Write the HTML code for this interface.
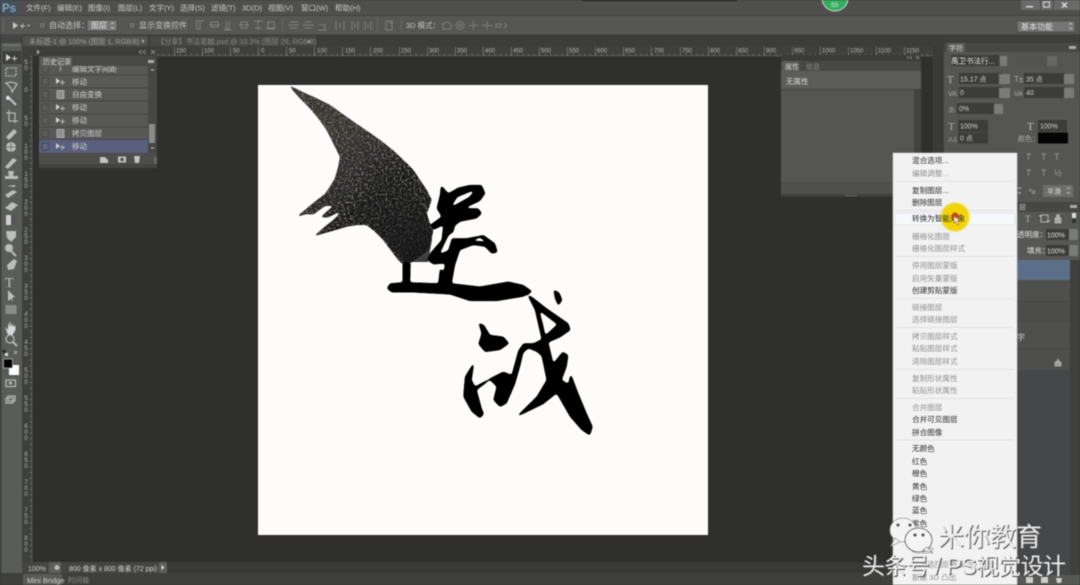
<!DOCTYPE html>
<html lang="zh"><head><meta charset="utf-8"><title>Photoshop</title>
<style>
html,body{margin:0;padding:0;width:1080px;height:585px;overflow:hidden;background:#2f302e}
svg{display:block;filter:blur(.5px)}
text{font-family:"Liberation Sans","Noto Sans CJK SC",sans-serif}
.m{font-size:7.5px;fill:#c9c9c9}
.o{font-size:8px;fill:#c4c4c4}
.r{font-size:6px;fill:#b5b5b5}
.v{font-size:6px;fill:#b5b5b5}
.h{font-size:7.5px;fill:#cfcfcf}
.p{font-size:7px;fill:#d0d0d0}
.d{font-size:7.6px;fill:#2c2c2c}
.g{font-size:7.6px;fill:#8f8f8f}
.i{fill:none;stroke:#b4b6b1;stroke-width:1.3}
.j{fill:#bcbeb9}
</style></head><body>
<svg width="1080" height="585" viewBox="0 0 1080 585" xmlns="http://www.w3.org/2000/svg">
<defs>
<pattern id="tx" x="0" y="46" width="5.62" height="10" patternUnits="userSpaceOnUse"><rect x="0" y="7.5" width=".6" height="2.5" fill="#7e7e7e"/></pattern>
<pattern id="ty" x="22" y="0" width="10" height="5.62" patternUnits="userSpaceOnUse"><rect x="7.5" y="0" width="2.5" height=".6" fill="#7e7e7e"/></pattern>
<linearGradient id="wg" gradientUnits="userSpaceOnUse" x1="290" y1="85" x2="440" y2="265"><stop offset="0" stop-color="#35342f"/><stop offset=".5" stop-color="#2a2927"/><stop offset="1" stop-color="#141414"/></linearGradient>
<filter id="goo" filterUnits="userSpaceOnUse" x="258" y="85" width="450" height="450"><feGaussianBlur stdDeviation="1.2"/><feColorMatrix type="matrix" values="1 0 0 0 0 0 1 0 0 0 0 0 1 0 0 0 0 0 10 -4"/></filter>
<filter id="ink" filterUnits="userSpaceOnUse" x="258" y="85" width="450" height="450"><feGaussianBlur in="SourceGraphic" stdDeviation="1" result="b"/><feColorMatrix in="b" type="matrix" values="1 0 0 0 0 0 1 0 0 0 0 0 1 0 0 0 0 0 10 -4" result="shape"/><feTurbulence type="fractalNoise" baseFrequency=".5" numOctaves="2" seed="4" result="n"/><feColorMatrix in="n" type="matrix" values="0 0 0 0 .38 0 0 0 0 .37 0 0 0 0 .35 1.6 0 0 0 -.78" result="s"/><feComposite in="s" in2="shape" operator="in" result="c"/><feMerge><feMergeNode in="shape"/><feMergeNode in="c"/></feMerge></filter>
<linearGradient id="fade" gradientUnits="userSpaceOnUse" x1="340" y1="130" x2="430" y2="265"><stop offset="0" stop-color="#1a1a1a" stop-opacity="0"/><stop offset=".5" stop-color="#1a1a1a" stop-opacity=".25"/><stop offset="1" stop-color="#141414" stop-opacity=".9"/></linearGradient>
<radialGradient id="yl"><stop offset="0" stop-color="#f4d000"/><stop offset=".85" stop-color="#f2d40a"/><stop offset="1" stop-color="#efe060" stop-opacity=".6"/></radialGradient>
</defs>

<!-- base -->
<rect width="1080" height="585" fill="#2f302e"/>
<!-- menu bar -->
<rect width="1080" height="15" fill="#4f504e"/>
<rect x="0" y="15" width="1080" height="20" fill="#565755"/>
<rect x="0" y="15" width="1080" height=".8" fill="#3d3d3c"/>
<rect x="0" y="34.5" width="1080" height="1" fill="#3b3b3a"/>
<rect x="582" y="0" width="155" height="1.2" fill="#2c2c2c"/>
<rect x="0" y="0" width="19" height="15" fill="#46505a"/>
<text x="2" y="12" font-size="11.5" font-weight="bold" fill="#7fa3c4">Ps</text>
<text class="m" y="10.5"><tspan x="26">文件(F)</tspan><tspan x="57">编辑(E)</tspan><tspan x="88">图像(I)</tspan><tspan x="118">图层(L)</tspan><tspan x="149">文字(Y)</tspan><tspan x="180">选择(S)</tspan><tspan x="211">滤镜(T)</tspan><tspan x="242">3D(D)</tspan><tspan x="268">视图(V)</tspan><tspan x="301">窗口(W)</tspan><tspan x="335">帮助(H)</tspan></text>
<circle cx="835" cy="-2" r="13" fill="#34ad5e" stroke="#c9d8cd" stroke-width="1"/>
<text x="831" y="7" font-size="6.5" fill="#d8f0de">55</text>
<rect x="1021" y="0" width="59" height="10" fill="#6a6a6a"/>
<rect x="1040" y="0" width=".8" height="10" fill="#444"/><rect x="1053" y="0" width=".8" height="10" fill="#444"/>
<rect x="1026" y="6" width="7" height="1.4" fill="#ddd"/>
<rect x="1043.500" y="2" width="6" height="5" fill="none" stroke="#ddd"/>
<path d="M1062 2.500l5 5m0-5l-5 5" stroke="#e5e5e5" stroke-width="1.300"/>

<!-- options bar -->
<rect x="3" y="18" width=".8" height="14" fill="#6c6c6b"/>
<path d="M13 22l5 3.500-5 3.500z" fill="#c8c8c8"/><path d="M20 26h5m-2.500-2.500v5" stroke="#bbb" stroke-width="1" fill="none"/>
<rect x="27" y="25" width="3" height="1" fill="#bbb"/>
<rect x="39" y="22" width="6.500" height="6.500" fill="#6a6a6a" stroke="#484848" stroke-width=".7"/>
<text class="o" x="49" y="28">自动选择：</text>
<rect x="87" y="20" width="30" height="11" fill="#777" stroke="#444" stroke-width=".7"/>
<text class="o" x="91" y="28" style="fill:#eaeaea">图层</text>
<path d="M111 24l1.500-1.500 1.500 1.500m-3 3l1.500 1.500 1.500-1.500" stroke="#ddd" fill="none" stroke-width=".7"/>
<rect x="129" y="22" width="6.500" height="6.500" fill="#6a6a6a" stroke="#484848" stroke-width=".7"/>
<text class="o" x="139" y="28">显示变换控件</text>
<rect x="186" y="18" width=".8" height="14" fill="#6c6c6b"/>
<g fill="none" stroke="#7f7f7d" stroke-width="1"><path d="M195 21h9M197 22v7h3v-7M211 22h7v5h-7zM209 25h11M224 30h8M226 21v8h3v-8"/><path d="M241 22h6v6h-6zM239 25h10M254 21h9M258 21v9M255 28h7M268 22h6v7h-6zM266 28h10"/></g>
<rect x="282" y="18" width=".8" height="14" fill="#6c6c6b"/>
<g fill="none" stroke="#7f7f7d" stroke-width="1"><path d="M290 22h8M288 25h11M290 28h8M305 22h7M303 25h11M305 28h7M318 30h9M320 25h5v5h-5M336 21v9M340 23v5M344 21v9M352 21v9M355 23v5M358 21v9M365 21v9M368 23v5M371 21v9"/></g>
<rect x="377" y="18" width=".8" height="14" fill="#6c6c6b"/>
<path d="M386 21h6v9h-6zM389 23h4" stroke="#7f7f7d" fill="none"/>
<rect x="401" y="18" width=".8" height="14" fill="#6c6c6b"/>
<text class="o" x="406" y="28" style="font-size:7.5px">3D 模式：</text>
<g fill="none" stroke="#7c7c7c" stroke-width="1"><path d="M443 26a4 4 0 018 0v3h-8zM441 24h4"/><circle cx="460" cy="25.500" r="4"/><circle cx="460" cy="25.500" r="1.500"/><path d="M473.500 21v9M469 25.500h9M487 21v9M482 25.500h10M496 24h5v3h-5zM504 23l3 2.500-3 2.500"/></g>
<rect x="1017" y="21" width="58" height="11" fill="#757575" stroke="#454545" stroke-width=".7"/>
<text class="o" x="1021" y="29.500" style="fill:#e0e0e0">基本功能</text>
<path d="M1069 24.500l1.500-1.500 1.500 1.500m-3 3l1.500 1.500 1.500-1.500" stroke="#ddd" fill="none" stroke-width=".7"/>

<!-- tab bar -->
<rect x="0" y="35.500" width="1080" height="10.500" fill="#3c3d3b"/>
<rect x="23" y="36" width="125" height="10" fill="#515250"/>
<rect x="150" y="36" width="166" height="10" fill="#474846"/>
<text x="29" y="44" font-size="7.200" fill="#9f9f9f">未标题-1 @ 100% (图层 1, RGB/8) *</text>
<text x="141" y="44" font-size="7" fill="#bbb">×</text>
<text x="157" y="44" font-size="7.200" fill="#868686">【分享】书法笔触.psd @ 33.3% (图层 29, RGB/8)</text>
<text x="307" y="44" font-size="7" fill="#bbb">×</text>

<!-- h ruler -->
<rect x="22" y="46" width="911" height="10" fill="#3f403e"/>
<rect x="157" y="46" width="776" height="10" fill="url(#tx)"/>
<rect x="157" y="55.600" width="776" height=".6" fill="#6e6e6e"/>
<g fill="#7e7e7e"><rect x="174" y="47" width=".7" height="9"/><rect x="202" y="47" width=".7" height="9"/><rect x="230" y="47" width=".7" height="9"/><rect x="258" y="47" width=".7" height="9"/><rect x="286" y="47" width=".7" height="9"/><rect x="314" y="47" width=".7" height="9"/><rect x="342" y="47" width=".7" height="9"/><rect x="370" y="47" width=".7" height="9"/><rect x="399" y="47" width=".7" height="9"/><rect x="427" y="47" width=".7" height="9"/><rect x="455" y="47" width=".7" height="9"/><rect x="483" y="47" width=".7" height="9"/><rect x="511" y="47" width=".7" height="9"/><rect x="539" y="47" width=".7" height="9"/><rect x="567" y="47" width=".7" height="9"/><rect x="595" y="47" width=".7" height="9"/><rect x="623" y="47" width=".7" height="9"/><rect x="651" y="47" width=".7" height="9"/><rect x="680" y="47" width=".7" height="9"/><rect x="708" y="47" width=".7" height="9"/><rect x="736" y="47" width=".7" height="9"/><rect x="764" y="47" width=".7" height="9"/><rect x="792" y="47" width=".7" height="9"/><rect x="820" y="47" width=".7" height="9"/><rect x="848" y="47" width=".7" height="9"/><rect x="876" y="47" width=".7" height="9"/><rect x="904" y="47" width=".7" height="9"/></g>
<text class="r" y="52.500"><tspan x="176">150</tspan><tspan x="204">100</tspan><tspan x="233">50</tspan><tspan x="261">0</tspan><tspan x="289">50</tspan><tspan x="317">100</tspan><tspan x="345">150</tspan><tspan x="373">200</tspan><tspan x="401">250</tspan><tspan x="429">300</tspan><tspan x="457">350</tspan><tspan x="485">400</tspan><tspan x="513">450</tspan><tspan x="541">500</tspan><tspan x="569">550</tspan><tspan x="597">600</tspan><tspan x="625">650</tspan><tspan x="654">700</tspan><tspan x="682">750</tspan><tspan x="710">800</tspan><tspan x="738">850</tspan><tspan x="766">900</tspan><tspan x="794">950</tspan><tspan x="822">1000</tspan><tspan x="850">1050</tspan><tspan x="878">1100</tspan><tspan x="906">1150</tspan></text>

<!-- v ruler -->
<rect x="22" y="46" width="10" height="516" fill="#3f403e"/>
<rect x="22" y="56" width="10" height="506" fill="url(#ty)"/>
<rect x="31.500" y="56" width=".7" height="506" fill="#6e6e6e"/>
<g text-anchor="middle">
<text class="v" x="26" y="64">5<tspan x="26" dy="6">0</tspan></text>
<text class="v" x="26" y="92">0</text>
<text class="v" x="26" y="120">5<tspan x="26" dy="6">0</tspan></text>
<text class="v" x="26" y="148">1<tspan x="26" dy="6">0</tspan><tspan x="26" dy="6">0</tspan></text>
<text class="v" x="26" y="176">1<tspan x="26" dy="6">5</tspan><tspan x="26" dy="6">0</tspan></text>
<text class="v" x="26" y="204">2<tspan x="26" dy="6">0</tspan><tspan x="26" dy="6">0</tspan></text>
<text class="v" x="26" y="232">2<tspan x="26" dy="6">5</tspan><tspan x="26" dy="6">0</tspan></text>
<text class="v" x="26" y="260">3<tspan x="26" dy="6">0</tspan><tspan x="26" dy="6">0</tspan></text>
<text class="v" x="26" y="288">3<tspan x="26" dy="6">5</tspan><tspan x="26" dy="6">0</tspan></text>
<text class="v" x="26" y="316">4<tspan x="26" dy="6">0</tspan><tspan x="26" dy="6">0</tspan></text>
<text class="v" x="26" y="344">4<tspan x="26" dy="6">5</tspan><tspan x="26" dy="6">0</tspan></text>
<text class="v" x="26" y="372">5<tspan x="26" dy="6">0</tspan><tspan x="26" dy="6">0</tspan></text>
<text class="v" x="26" y="400">5<tspan x="26" dy="6">5</tspan><tspan x="26" dy="6">0</tspan></text>
<text class="v" x="26" y="428">6<tspan x="26" dy="6">0</tspan><tspan x="26" dy="6">0</tspan></text>
<text class="v" x="26" y="456">6<tspan x="26" dy="6">5</tspan><tspan x="26" dy="6">0</tspan></text>
<text class="v" x="26" y="484">7<tspan x="26" dy="6">0</tspan><tspan x="26" dy="6">0</tspan></text>
<text class="v" x="26" y="512">7<tspan x="26" dy="6">5</tspan><tspan x="26" dy="6">0</tspan></text>
<text class="v" x="26" y="540">8<tspan x="26" dy="6">0</tspan><tspan x="26" dy="6">0</tspan></text>
</g>

<!-- toolbar -->
<rect x="0" y="35.500" width="22" height="549.500" fill="#5a5c58"/>
<rect x="0" y="35.500" width="1.500" height="549.500" fill="#41423f"/>
<rect x="1.500" y="36" width="20.500" height="7" fill="#444543"/>
<rect x="3" y="44" width="17" height="2" fill="#6d6f6b"/>
<rect x="2.500" y="51" width="19" height="13" fill="#3f403e"/>
<path d="M6 54l5 3.500-5 3.500z" fill="#d8d8d8"/><path d="M12 58.500h5m-2.500-2.500v5" stroke="#ccc" fill="none"/>
<rect x="6" y="68" width="10" height="8" class="i" stroke-dasharray="2 1"/>
<path class="i" d="M6 83l6-1 5 2-3 5-2 3-1-4z"/>
<path d="M7 96l9 9" stroke="#c4c4c4" stroke-width="2"/><circle cx="8" cy="98" r="2" fill="#ddd"/>
<path class="i" d="M9 110v11h9M6 113h9v10"/>
<path d="M6 137l8-8 3 3-8 8z" class="j"/>
<circle cx="11" cy="147" r="5" class="j"/><path d="M6 147h10M11 142v10" stroke="#5a5c58" stroke-width=".7"/>
<path d="M5 167l8-9 4 2-9 9z" class="j"/>
<path d="M8 171h6l-1 5h5v3H5v-3h4z" class="j"/>
<path d="M5 195l8-5 4 2-9 6zM7 186l8-1v2z" class="j"/>
<path d="M5 208l7-6 6 3-7 6z" class="j"/>
<rect x="6" y="215" width="10" height="10" fill="#cfcfcf"/><rect x="11" y="215" width="5" height="10" fill="#555"/>
<path d="M6 231h10v6l-5 5-4-4z" class="j"/>
<circle cx="9" cy="248" r="4" class="j"/><path d="M11 251l5 5" stroke="#bcbeb9" stroke-width="2"/>
<path d="M7 265l7-6 3 2-3 8-6 1z" class="j"/>
<text x="5" y="287" font-size="14" fill="#c4c4c4" style="font-family:'Liberation Serif',serif">T</text>
<path d="M8 290l7 7-3 1 1 4-2-3-3 2z" class="j"/>
<rect x="5.500" y="305" width="11" height="9" fill="#8a8c88"/>
<path d="M5 327l3 3v-7l1 4v-6l1.500 6v-6l1.500 6 1-4 .5 4 2-2v5l-3 5H8z" fill="#d8d8d8"/>
<circle cx="10" cy="339" r="4" class="i"/><path d="M13 342l4 4" stroke="#b4b6b1" stroke-width="2"/>
<rect x="2.500" y="350" width="3" height="3" fill="#222"/><rect x="5" y="353" width="3" height="3" fill="#ddd"/>
<path d="M14 351l3 3m0-3l-3 3" stroke="#aaa"/>
<rect x="9" y="365" width="10" height="10" fill="#fff"/>
<rect x="3.500" y="359" width="9" height="9" fill="#000" stroke="#ccc" stroke-width=".7"/>
<rect x="6" y="380" width="9.500" height="6.500" class="i"/><circle cx="10.500" cy="383" r="1.600" fill="#b5b5b5"/>
<rect x="6" y="398" width="7" height="5" class="i"/><rect x="8" y="396" width="7" height="5" class="i"/>

<!-- document canvas -->
<rect x="258" y="85" width="450" height="450" fill="#fdfcfa"/>
<g filter="url(#ink)"><g transform="translate(270 80) scale(.3333)">
<path fill="url(#wg)" d="M55 15L100 37 140 55 180 75 215 100 250 125 290 152 330 180 370 212 400 240 430 270 450 300 470 330 485 360 478 380 470 400 478 425 490 450 483 485 475 510 450 530 420 550 398 552 385 540 362 510 340 480 315 455 290 435 260 435 230 440 190 452 160 460 130 470 165 440 190 420 216 393 190 404 175 412 152 412 172 393 192 376 165 378 130 403 108 402 78 412 105 390 135 365 165 342 180 320 195 295 205 260 210 230 190 190 170 150 145 115 120 85 85 50z"/>
</g></g>
<path fill="url(#fade)" d="M340 132L400 180 425 210 432 240 428 262 405 262 385 240 370 225 350 215 380 170z"/>
<g filter="url(#goo)">
<g transform="translate(380 175) scale(.3333)">
<path fill="#050505" fill-rule="evenodd" d="M183 30L205 55 235 38 270 30 305 30 316 55 300 78 252 100 295 100 306 115 290 130 240 140 225 152 215 190 260 190 310 180 345 205 353 232 335 236 315 215 280 210 240 225 225 270 215 325 300 335 385 320 430 330 458 350 430 365 350 378 270 378 210 358 100 352 35 352 20 340 30 325 68 322 68 262 92 262 90 322 175 325 180 280 192 290 195 265 160 268 142 255 150 235 185 195 190 150 160 165 150 150 185 125 170 100 180 60zM212 97L232 66 286 44 268 66 225 90zM178 238L205 226 222 168 205 182zM268 200L300 188 328 206 300 198z"/>
</g>
<g transform="translate(440 280) scale(.3333)">
<path fill="#050505" d="M340 28L358 38 367 60 355 78 345 55z"/>
<path fill="#050505" d="M115 128L132 135 150 165 190 170 208 190 180 210 135 216 115 192 125 160z"/>
<path fill="#050505" fill-rule="evenodd" d="M262 45L275 50 320 85 385 130 392 150 360 172 325 187 340 250 368 215 385 225 380 260 365 300 385 312 392 280 415 340 440 400 458 440 450 467 425 450 390 410 350 340 310 372 226 413 290 350 320 300 305 228 290 215 265 205 250 218 240 260 225 312 200 370 180 381 160 360 170 320 150 300 110 330 125 385 132 402 120 415 95 395 70 350 75 290 103 245 95 300 105 320 150 295 190 275 215 285 235 212 250 190 280 190 305 178 285 90zM298 92L352 133 316 166 308 130z"/>
</g>
</g>

<!-- history panel -->
<rect x="39" y="47" width="118" height="121" fill="#3d3e3c"/>
<path d="M40 52l-3-2.500v5z" fill="#aaa"/>
<path d="M142 50l-3 2 3 2m4-4l-3 2 3 2M151 50l4 4m0-4l-4 4" stroke="#aaa" stroke-width=".7" fill="none"/>
<rect x="39" y="65" width="109" height="88" fill="#585957"/>
<rect x="148" y="65" width="9" height="88" fill="#474846"/>
<rect x="149" y="124" width="6" height="19" fill="#8b8c8a"/>
<path d="M151 70h3M151 148h3" stroke="#ccc"/>
<rect x="39" y="139.500" width="109" height="13" fill="#58607d"/>
<g fill="#3f403e"><rect x="39" y="74.500" width="109" height=".8"/><rect x="39" y="87.500" width="109" height=".8"/><rect x="39" y="100.500" width="109" height=".8"/><rect x="39" y="113.500" width="109" height=".8"/><rect x="39" y="126.500" width="109" height=".8"/><rect x="39" y="139" width="109" height=".8"/></g>
<g fill="#5c5d5b" stroke="#424341" stroke-width=".8"><rect x="42" y="66" width="6.500" height="6"/><rect x="42" y="78" width="6.500" height="7"/><rect x="42" y="91" width="6.500" height="7"/><rect x="42" y="104" width="6.500" height="7"/><rect x="42" y="117" width="6.500" height="7"/><rect x="42" y="130" width="6.500" height="7"/><rect x="42" y="143" width="6.500" height="7" fill="#5d6684"/></g>
<text x="58" y="71" font-size="8" fill="#ccc">T</text>
<g fill="#d2d2d2"><path d="M56 78l4 3-4 3zM56 104l4 3-4 3zM56 117l4 3-4 3zM56 143l4 3-4 3z"/></g>
<path d="M60 82.500h5m-2.500-2.500v5M60 108.500h5m-2.500-2.500v5M60 121.500h5m-2.500-2.500v5M60 147.500h5m-2.500-2.500v5" stroke="#ccc" stroke-width=".8"/>
<g fill="#8f908e" stroke="#c0c0c0" stroke-width=".7"><rect x="57" y="90.500" width="7" height="8"/><rect x="57" y="129.500" width="7" height="8"/></g>
<text class="h" x="72" y="71.500">编辑文字间距</text>
<text class="h"><tspan x="72" y="84.500">移动</tspan><tspan x="72" y="97">自由变换</tspan><tspan x="72" y="110">移动</tspan><tspan x="72" y="123">移动</tspan><tspan x="72" y="136">拷贝图层</tspan><tspan x="72" y="149">移动</tspan></text>
<rect x="39" y="56" width="118" height="10" fill="#494a48"/>
<rect x="40" y="56.500" width="32" height="9.500" fill="#5c5d5b"/>
<text class="p" x="43" y="64" style="fill:#d4d4d4">历史记录</text>
<rect x="148" y="60" width="6" height="3" fill="#aaa"/>
<rect x="39" y="153" width="118" height="11" fill="#4d4e4c"/>
<rect x="39" y="164" width="118" height="4" fill="#444543"/>
<g fill="#c2c2c2"><path d="M100 157h5l3 3v3h-8z"/><rect x="118" y="156.500" width="8" height="6"/><path d="M134 156h6l-1 7h-4z"/></g>
<circle cx="122" cy="159.500" r="1.700" fill="#4d4e4c"/>
<rect x="154" y="157" width="3" height="7" fill="#666"/>

<!-- properties panel -->
<rect x="781" y="55" width="140" height="142" fill="#3b3c3a"/>
<path d="M909 56l-2 1.500 2 1.500m3-3l-2 1.500 2 1.500M916 56l3 3m0-3l-3 3" stroke="#999" stroke-width=".6" fill="none"/>
<rect x="781" y="61" width="140" height="10" fill="#484947"/>
<rect x="782" y="61" width="17" height="10" fill="#5a5b59"/>
<text class="p" x="785" y="69">属性</text>
<text x="806" y="69" font-size="7" fill="#898989">信息</text>
<rect x="781" y="71" width="140" height="18" fill="#5c5d5b"/>
<text class="p" x="786" y="84" style="font-size:7.500px;fill:#dadada">无属性</text>
<rect x="781" y="89" width="140" height="1" fill="#3f403e"/>
<rect x="781" y="90" width="133" height="92" fill="#555654"/>
<rect x="914" y="90" width="7" height="92" fill="#434442"/>
<rect x="781" y="182" width="140" height="12" fill="#4f504e"/>
<rect x="781" y="194" width="140" height="3" fill="#3f403e"/>
<rect x="845" y="195" width="12" height="1" fill="#666"/>

<!-- right panel background -->
<rect x="933" y="46" width="11" height="516" fill="#3a3b39"/>
<rect x="944" y="36" width="136" height="167" fill="#555654"/>
<rect x="944" y="36" width="136" height="7" fill="#3d3e3c"/>
<rect x="944" y="43" width="136" height="9" fill="#474846"/>
<rect x="947" y="43" width="18" height="9" fill="#5e5f5d"/>
<text class="p" x="949" y="50.500">字符</text>
<rect x="1069" y="46" width="7" height="3" fill="#aaa"/>
<g fill="#3c3d3b">
<rect x="951" y="55" width="48" height="11"/>
<rect x="959" y="73" width="44" height="11"/><rect x="1024" y="73" width="41" height="11"/>
<rect x="959" y="87" width="44" height="11"/><rect x="1024" y="87" width="41" height="11"/>
<rect x="957" y="103" width="37" height="11"/>
<rect x="958" y="120" width="30" height="12"/><rect x="1038" y="120" width="29" height="12"/>
<rect x="958" y="132.500" width="30" height="11"/>
</g>
<rect x="1038" y="132.500" width="30" height="11" fill="#050505"/>
<rect x="1016" y="55" width="42" height="11" fill="#535452"/>
<g fill="#7a7b79"><rect x="1000" y="56" width="7" height="10"/><rect x="1047" y="56" width="10" height="10" fill="#666765"/><rect x="999" y="74" width="11" height="10"/><rect x="1064" y="74" width="10" height="10"/><rect x="999" y="88" width="11" height="10"/><rect x="1064" y="88" width="10" height="10"/><rect x="994" y="104" width="9" height="10"/></g>
<text class="p" x="951" y="63.500" style="fill:#e4e4e4;font-size:7.500px">禹卫书法行...</text>
<text class="p" x="960" y="81.500">15.17 点</text><text class="p" x="1026" y="81.500">35 点</text>
<text class="p" x="960" y="95">0</text><text class="p" x="1026" y="95">40</text>
<text class="p" x="959" y="111">0%</text>
<text class="p" x="960" y="128.500">100%</text><text class="p" x="1040" y="128.500">100%</text>
<text class="p" x="960" y="140.500">0 点</text>
<text class="p" x="1018" y="141" style="fill:#aaa">颜色：</text>
<text x="947" y="83" font-size="11" fill="#b5b5b5" style="font-family:'Liberation Serif',serif">T</text>
<text x="948" y="96" font-size="7" fill="#aaa">VA</text>
<text x="1014" y="82" font-size="8" fill="#aaa">T±</text>
<text x="1014" y="96" font-size="7" fill="#aaa">VA</text>
<text x="948" y="112" font-size="7" fill="#999">あ</text>
<text x="948" y="130" font-size="11" fill="#a8a8a8" style="font-family:'Liberation Serif',serif">T</text>
<text x="1027" y="130" font-size="11" fill="#c0c0c0" style="font-family:'Liberation Serif',serif">T</text>
<text x="948" y="142" font-size="7.500" fill="#8e8e8e">Aā</text>
<g font-size="9" fill="#9a9a9a" style="font-family:'Liberation Serif',serif"><text x="1026" y="160" fill="#9a9a9a">T</text><text x="1041" y="160" fill="#9a9a9a">T</text><text x="1054" y="160" fill="#9a9a9a">T</text><text x="1026" y="176" fill="#9a9a9a">T</text><text x="1041" y="176" fill="#9a9a9a">T</text><text x="1054" y="176" fill="#9a9a9a">½</text></g>
<rect x="1043" y="185" width="30" height="12" fill="#6d6e6c"/>
<text class="p" x="1047" y="194" style="fill:#e0e0e0">平滑</text>
<text x="1029" y="194" font-size="7" fill="#aaa">ªa</text>
<path d="M1018 189l1.500-1.500 1.500 1.500m-3 3l1.500 1.500 1.500-1.500M1067 189l1.500-1.500 1.500 1.500m-3 3l1.500 1.500 1.500-1.500" stroke="#ccc" stroke-width=".7" fill="none"/>

<!-- layers panel -->
<rect x="1017" y="202" width="63" height="10" fill="#474846"/>
<text class="p" x="1019" y="209.500" style="fill:#b8b8b8">层</text>
<rect x="1070" y="205" width="7" height="3" fill="#aaa"/>
<rect x="1017" y="212" width="63" height="48" fill="#575856"/>
<text x="1025" y="222" font-size="9" fill="#b5b5b5" style="font-family:'Liberation Serif',serif">T</text>
<path d="M1041 215h7v7h-7zM1039 216h3M1047 221h3" stroke="#b5b5b5" fill="none"/>
<path d="M1055 218h6v5h-6zM1056.500 218v-2a1.500 1.500 0 013 0v2" fill="#aaa" stroke="#bbb" stroke-width=".7"/>
<rect x="1072" y="213" width="4" height="5" fill="#ddd"/><rect x="1072" y="219" width="4" height="4" fill="#333"/>
<text class="p" x="1017" y="237" style="fill:#e2e2e2;font-size:7.500px">透明度：</text>
<rect x="1046" y="229" width="23" height="11" fill="#3c3d3b"/><rect x="1069" y="229" width="9" height="11" fill="#7a7b79"/>
<text class="p" x="1047" y="237.500" style="fill:#e2e2e2">100%</text>
<text class="p" x="1027" y="253" style="fill:#e2e2e2;font-size:7.500px">填充：</text>
<rect x="1046" y="245" width="23" height="11" fill="#3c3d3b"/><rect x="1069" y="245" width="9" height="11" fill="#7a7b79"/>
<text class="p" x="1047" y="253.500" style="fill:#e2e2e2">100%</text>
<rect x="1017" y="260" width="53" height="20" fill="#5b7088"/>
<rect x="1017" y="280" width="53" height="295" fill="#464749"/>
<rect x="1017" y="280" width="53" height="21" fill="#4f504e"/>
<rect x="1017" y="302" width="53" height="19" fill="#4c4d4b"/>
<rect x="1017" y="322" width="53" height="26" fill="#4f504e"/>
<rect x="1017" y="349" width="53" height="21" fill="#4e4f4d"/>
<rect x="1070" y="260" width="10" height="315" fill="#3f403e"/>
<text class="p" x="1017" y="340" style="fill:#c8c8c8;font-size:8px">字</text>
<path d="M1055 362h6v4h-6zM1056.500 362l1.500-3 1.500 3" fill="#9c9c9c" stroke="#bbb" stroke-width=".7"/>
<rect x="1017" y="575" width="63" height="10" fill="#575856"/>
<g fill="#cfcfcf"><path d="M1026 577h7v6h-7zM1041 577h7v6h-7z"/><path d="M1056 578h6l-1 5h-4z"/></g>

<!-- status bar -->
<rect x="22" y="562" width="145" height="11" fill="#454644"/>
<rect x="167" y="562" width="850" height="11" fill="#383937"/>
<rect x="49" y="562" width="12" height="11" fill="#5e5f5d"/>
<text x="28" y="571" font-size="7" fill="#c8c8c8">100%</text>
<circle cx="57" cy="567.500" r="2.500" fill="#bbb"/>
<text x="69" y="571" font-size="7" fill="#d0d0d0">800 像素 x 800 像素 (72 ppi)</text>
<rect x="159" y="562" width="8" height="11" fill="#5e5f5d"/>
<path d="M161.500 565l3 2.500-3 2.500z" fill="#ddd"/>
<rect x="0" y="573" width="1017" height="12" fill="#3f403e"/>
<rect x="23" y="574" width="39" height="11" fill="#595a58"/>
<text x="27" y="583" font-size="7.500" fill="#cfcfcf">Mini Bridge</text>
<text x="68" y="582.500" font-size="7" fill="#878787">时间轴</text>

<!-- context menu -->
<rect x="893" y="153" width="124" height="432" fill="#f2f2f2" stroke="#cfcfcf" stroke-width=".6"/>
<g fill="#dcdcdc"><rect x="896" y="181" width="118" height=".8"/><rect x="896" y="210" width="118" height=".8"/><rect x="896" y="256" width="118" height=".8"/><rect x="896" y="298" width="118" height=".8"/><rect x="896" y="327" width="118" height=".8"/><rect x="896" y="369" width="118" height=".8"/><rect x="896" y="398" width="118" height=".8"/><rect x="896" y="439.500" width="118" height=".8"/></g>
<rect x="895" y="213" width="120" height="12" fill="#f7f8fa" stroke="#dcdfe3" stroke-width=".7"/>
<circle cx="955" cy="217" r="15" fill="url(#yl)"/>
<text class="d" x="912" y="163">混合选项...</text>
<text class="g" x="912" y="176">编辑调整...</text>
<text class="d" x="912" y="193">复制图层...</text>
<text class="d" x="912" y="205">删除图层</text>
<text class="d" x="912" y="221">转换为智能对象</text>
<text class="g" x="912" y="239">栅格化图层</text>
<text class="g" x="912" y="251">栅格化图层样式</text>
<text class="g" x="912" y="268">停用图层蒙版</text>
<text class="g" x="912" y="281">启用矢量蒙版</text>
<text class="d" x="912" y="293">创建剪贴蒙版</text>
<text class="g" x="912" y="310">链接图层</text>
<text class="g" x="912" y="322">选择链接图层</text>
<text class="g" x="912" y="339">拷贝图层样式</text>
<text class="g" x="912" y="351">粘贴图层样式</text>
<text class="g" x="912" y="364">清除图层样式</text>
<text class="g" x="912" y="381">复制形状属性</text>
<text class="g" x="912" y="393">粘贴形状属性</text>
<text class="g" x="912" y="410">合并图层</text>
<text class="d" x="912" y="422">合并可见图层</text>
<text class="d" x="912" y="435">拼合图像</text>
<text class="d" x="912" y="451">无颜色</text>
<text class="d" x="912" y="464">红色</text>
<text class="d" x="912" y="476">橙色</text>
<text class="d" x="912" y="489">黄色</text>
<text class="d" x="912" y="501">绿色</text>
<text class="d" x="912" y="513">蓝色</text>
<text class="d" x="912" y="526">紫色</text>
<text class="g" x="912" y="553">明信片</text>
<text class="g" x="912" y="567">从所选图层新建 3D 凸出</text>
<text class="g" x="912" y="580">新建 3D 凸出</text>
<circle cx="955" cy="216" r="3.500" fill="#c2461d"/>
<path d="M954 216l0 7 2-1.500 1.500 3.500 1.500-.7-1.500-3.300 2.500-.2z" fill="#f5f5f5" stroke="#a85a20" stroke-width=".6"/>

<!-- watermark -->
<g fill="#f4f4f4" stroke="#9a9a9a" stroke-width=".8">
<ellipse cx="903" cy="530" rx="13" ry="12"/>
<path d="M895 538l-4 8 9-4z"/>
<ellipse cx="918.500" cy="540" rx="13.500" ry="12" stroke="#555"/>
<path d="M927 547l5 6-9-3z"/>
</g>
<g fill="#4a4a4a"><circle cx="898" cy="525" r="1.500"/><circle cx="910" cy="525" r="1.500"/><circle cx="915" cy="535" r="1.500"/><circle cx="923" cy="535" r="1.500"/></g>
<text x="938" y="546" font-size="26" fill="#ededed" style="filter:drop-shadow(1px 1px 0 #5a5a5a)">米你教育</text>
<text x="862" y="574" font-size="23" fill="#efefef" textLength="204" style="filter:drop-shadow(1px 1px 0 #4a4a4a)">头条号 / PS视觉设计</text>
</svg>
</body></html>
